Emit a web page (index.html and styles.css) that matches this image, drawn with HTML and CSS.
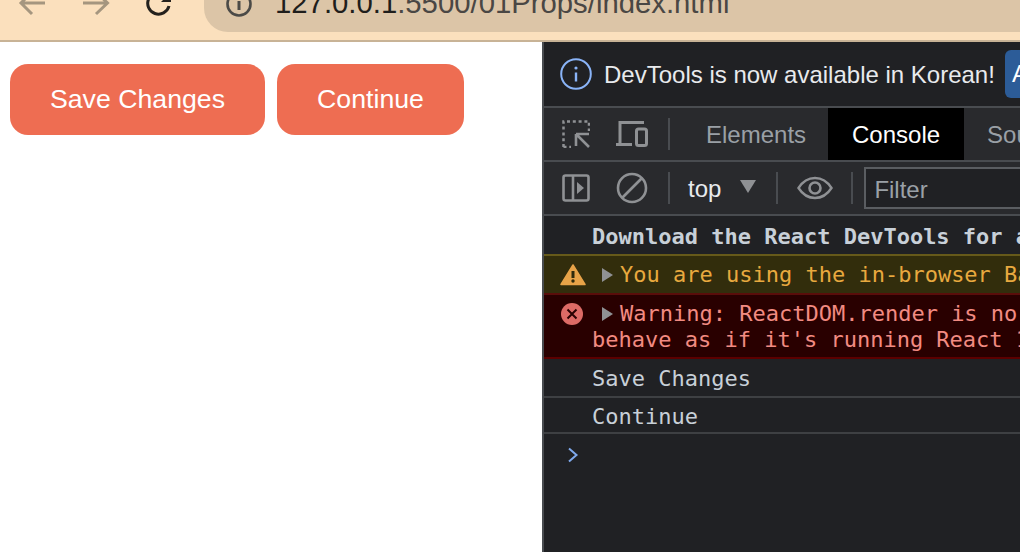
FILE: index.html
```html
<!DOCTYPE html>
<html lang="en">
<head>
<meta charset="utf-8">
<title>01Props</title>
<link rel="stylesheet" href="styles.css">
</head>
<body>
<header class="chrome">
  <svg class="nav nav-back" width="30" height="20" viewBox="0 0 30 20"><path d="M27 3H3.500M14 -8 3 3l11 11" fill="none" stroke="#a5967f" stroke-width="3"/></svg>
  <svg class="nav nav-forward" width="30" height="20" viewBox="0 0 30 20"><path d="M0 3h24M13 -8 24.500 3 13 14" fill="none" stroke="#a5967f" stroke-width="3"/></svg>
  <svg class="nav nav-reload" width="30" height="20" viewBox="0 0 30 20"><path d="M24 6A10.800 10.800 0 1 1 19 -6" fill="none" stroke="#24211d" stroke-width="3"/><path d="M16 2h10v-10z" fill="#24211d"/></svg>
  <div class="address">
    <svg class="address-icon" width="30" height="30" viewBox="0 0 30 30"><circle cx="13" cy="15" r="11.500" fill="none" stroke="#4b4a47" stroke-width="2.600"/><path d="M13 12v9" stroke="#4b4a47" stroke-width="3"/></svg>
    <span class="url"><span class="url-host">127.0.0.1</span>:5500/01Props/index.html</span>
  </div>
</header>
<main class="split">
  <section class="page">
    <button class="cta cta-save">Save Changes</button>
    <button class="cta cta-continue">Continue</button>
  </section>
  <section class="devtools">
    <div class="infobar">
      <svg class="icon" width="32" height="32" viewBox="0 0 32 32"><circle cx="16" cy="16" r="14.800" fill="none" stroke="#8ab4f8" stroke-width="2"/><path d="M16 14.500v9" stroke="#8ab4f8" stroke-width="2.400"/><circle cx="16" cy="10" r="1.600" fill="#8ab4f8"/></svg>
      <span class="info-text">DevTools is now available in Korean!</span>
      <span class="info-btn">A</span>
    </div>
    <div class="tabs">
      <svg class="icon tool-first" width="28" height="28" viewBox="0 0 28 28"><path d="M1.500 27V1.500H27V11" fill="none" stroke="#8f9194" stroke-width="2.500" stroke-dasharray="3 2.800"/><path d="M1.500 27H9" fill="none" stroke="#8f9194" stroke-width="2.500" stroke-dasharray="3 2.800"/><path d="M14 14h13M14 14v12M14 14l13 13" fill="none" stroke="#8f9194" stroke-width="2.600"/></svg>
      <svg class="icon tool-second" width="32" height="26" viewBox="0 0 32 26"><path d="M4 23V1.500h24M0 23.500h16" fill="none" stroke="#8f9194" stroke-width="3"/><rect x="20.500" y="8" width="10" height="16.500" rx="2" fill="none" stroke="#8f9194" stroke-width="3"/></svg>
      <span class="sep sep-tabs"></span>
      <span class="tab tab-elements">Elements</span>
      <span class="tab tab-active">Console</span>
      <span class="tab tab-sources">Sources</span>
    </div>
    <div class="filterbar">
      <svg class="icon tool-first" width="28" height="28" viewBox="0 0 28 28"><rect x="1.500" y="1.500" width="25" height="25" rx="2" fill="none" stroke="#8f9194" stroke-width="2.600"/><path d="M11 2v24" stroke="#8f9194" stroke-width="2.600"/><path d="M15 8l7 6-7 6z" fill="#8f9194"/></svg>
      <svg class="icon tool-clear" width="32" height="32" viewBox="0 0 32 32"><circle cx="16" cy="16" r="14" fill="none" stroke="#8f9194" stroke-width="2.600"/><path d="M6 26 26 6" stroke="#8f9194" stroke-width="2.600"/></svg>
      <span class="sep sep-one"></span>
      <span class="context">top</span>
      <span class="caret"></span>
      <span class="sep sep-two"></span>
      <svg class="icon eye" width="36" height="24" viewBox="0 0 36 24"><path d="M1.500 12C6 5 12 2 18 2s12 3 16.500 10C30 19 24 22 18 22S6 19 1.500 12z" fill="none" stroke="#8f9194" stroke-width="2.400"/><circle cx="18" cy="12" r="5.500" fill="none" stroke="#8f9194" stroke-width="2.600"/></svg>
      <span class="sep sep-three"></span>
      <span class="filter">Filter</span>
    </div>
    <div class="log log-plain log-bold">Download the React DevTools for a better development experience</div>
    <div class="log log-warn">
      <svg class="icon" width="26" height="22" viewBox="0 0 26 22"><path d="M13 1 25 20.500H1z" fill="#e8a348" stroke="#e8a348" stroke-width="1.500" stroke-linejoin="round"/><path d="M13 7v7" stroke="#2f2a0c" stroke-width="3"/><circle cx="13" cy="17" r="1.700" fill="#2f2a0c"/></svg>
      <span class="arrow"></span>
      <span>You are using the in-browser Babel transformer</span>
    </div>
    <div class="log log-error">
      <svg class="icon" width="22" height="22" viewBox="0 0 22 22"><circle cx="11" cy="11" r="11" fill="#dd6b66"/><path d="M6.500 6.500l9 9M15.500 6.500l-9 9" stroke="#2a0202" stroke-width="2"/></svg>
      <span class="arrow"></span>
      <span class="error-text">Warning: ReactDOM.render is no longer supported in React 18.<br><span class="error-wrap">behave as if it's running React 17</span></span>
    </div>
    <div class="log log-plain log-save">Save Changes</div>
    <div class="log log-plain log-last">Continue</div>
    <svg class="icon prompt" width="12" height="16" viewBox="0 0 12 16"><path d="M2 1.500 9.500 8 2 14.500" fill="none" stroke="#7fa9ec" stroke-width="2"/></svg>
  </section>
</main>
</body>
</html>
```
FILE: styles.css
```css
* { box-sizing: border-box; }
html, body { margin: 0; height: 100%; }
body {
  width: 1020px;
  height: 552px;
  overflow: hidden;
  display: flex;
  flex-direction: column;
  font-family: "Liberation Sans", Arial, sans-serif;
  background: #fff;
}
.chrome {
  height: 42px;
  flex: none;
  display: flex;
  align-items: flex-start;
  background: #fbe0bd;
  border-bottom: 2px solid #c8b396;
  overflow: hidden;
}
.nav { flex: none; }
.nav-back { margin-left: 18px; }
.nav-forward { margin-left: 35px; }
.nav-reload { margin-left: 32px; }
.address {
  flex: 1;
  height: 32px;
  margin-left: 29px;
  display: flex;
  align-items: flex-end;
  gap: 19px;
  padding: 0 0 0 22px;
  background: #dcc5a7;
  border-bottom-left-radius: 24px;
  overflow: hidden;
}
.address-icon { flex: none; margin-bottom: 13px; }
.url {
  font-size: 29.300px;
  line-height: 32px;
  color: #4a4744;
  white-space: nowrap;
  margin-bottom: 13px;
}
.url-host { color: #1f1e1c; }

.split { flex: 1; display: flex; min-height: 0; }
.page {
  width: 542px;
  flex: none;
  display: flex;
  align-items: flex-start;
  gap: 12px;
  padding: 22px 0 0 10px;
  background: #fff;
}
.cta {
  height: 71px;
  border: 0;
  border-radius: 18px;
  background: #ee6d52;
  color: #fff;
  font: 26.700px "Liberation Sans", Arial, sans-serif;
  padding: 0;
}
.cta-save { width: 255px; }
.cta-continue { width: 187px; }

.devtools {
  flex: 1;
  min-width: 0;
  display: flex;
  flex-direction: column;
  background: #202124;
  border-left: 2px solid #494c50;
  overflow: hidden;
  white-space: nowrap;
}
.icon { flex: none; }
.infobar {
  height: 66px;
  flex: none;
  display: flex;
  align-items: center;
  padding: 0 0 0 16px;
  border-bottom: 2px solid #494c50;
}
.info-text {
  margin: 2px 0 0 12px;
  font-size: 24px;
  color: #e8eaed;
}
.info-btn {
  margin-left: 10px;
  width: 60px;
  height: 48px;
  flex: none;
  border-radius: 6px;
  background: #2c5c98;
  color: #fff;
  font-size: 24px;
  line-height: 48px;
  padding-left: 7px;
}
.tabs, .filterbar {
  height: 54px;
  flex: none;
  display: flex;
  align-items: center;
  background: #292a2d;
  border-bottom: 2px solid #494c50;
}
.tool-first { margin-left: 18px; }
.tool-second { margin-left: 26px; }
.tool-clear { margin-left: 26px; }
.sep { width: 2px; height: 32px; flex: none; background: #494c50; }
.sep-tabs { margin-left: 20px; }
.tab {
  height: 52px;
  flex: none;
  font-size: 24px;
  line-height: 54px;
  padding: 0 23px;
  color: #9aa0a6;
}
.tab-elements { margin-left: 13px; padding-right: 22px; }
.tab-active { width: 136px; padding: 0; text-align: center; background: #000; color: #fff; }
.tab-sources { padding-right: 0; }
.sep-one { margin-left: 20px; }
.context { margin: 2px 0 0 18px; font-size: 24px; color: #e8eaed; }
.caret {
  margin-left: 19px;
  margin-bottom: 4px;
  width: 0;
  height: 0;
  border-left: 8px solid transparent;
  border-right: 8px solid transparent;
  border-top: 13px solid #8f9194;
}
.sep-two { margin-left: 20px; }
.eye { margin-left: 19px; }
.sep-three { margin-left: 18px; }
.filter {
  margin-left: 11px;
  width: 200px;
  height: 42px;
  flex: none;
  font-size: 24px;
  line-height: 38px;
  padding: 2px 0 0 8px;
  color: #9aa0a6;
  background: #202124;
  border: 2px solid #5a5d61;
}
.log {
  flex: none;
  font-family: "DejaVu Sans Mono", monospace;
  font-size: 22px;
  line-height: 26px;
  padding-left: 48px;
}
.log-plain {
  height: 39px;
  padding-top: 7px;
  color: #c8d0d8;
  border-bottom: 2px solid #3e4043;
}
.log-bold { height: 38px; padding-top: 8px; font-weight: 700; border-bottom: 0; }
.log-last { height: 36px; padding-top: 6px; }
.log-warn {
  height: 41px;
  display: flex;
  align-items: center;
  padding-left: 16px;
  color: #e8a93f;
  background: #322d0c;
  border-top: 2px solid #665a1a;
  border-bottom: 2px solid #5a0d0a;
}
.log-error {
  height: 64px;
  display: flex;
  align-items: flex-start;
  padding: 6px 0 0 17px;
  color: #f28b82;
  background: #290000;
  border-bottom: 2px solid #5c0000;
}
.log-error .icon { margin-top: 2px; }
.arrow {
  flex: none;
  margin: 0 7px 0 16px;
  width: 0;
  height: 0;
  border-top: 7px solid transparent;
  border-bottom: 7px solid transparent;
  border-left: 11px solid #8f9194;
}
.log-error .arrow { margin: 6px 7px 0 19px; }
.error-text { display: block; }
.error-wrap { display: inline-block; margin-left: -28px; }
.prompt { margin: 13px 0 0 23px; }
```
